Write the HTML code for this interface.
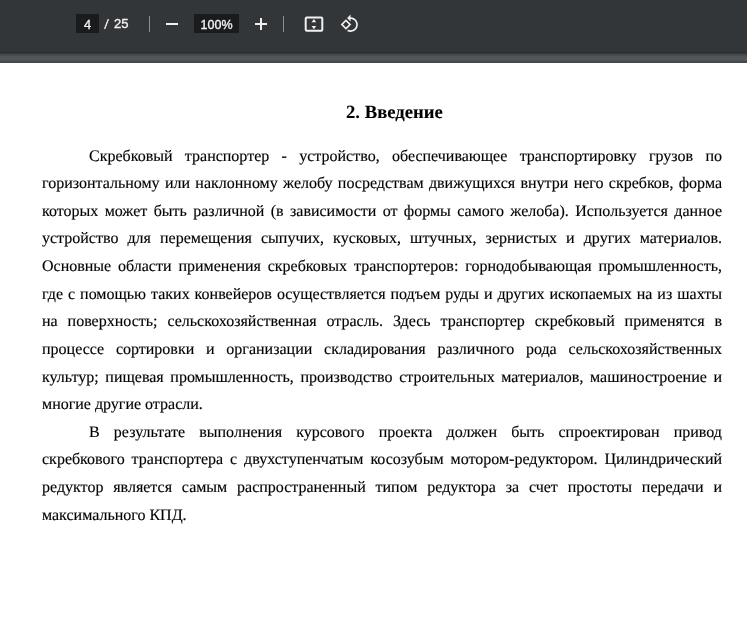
<!DOCTYPE html>
<html><head><meta charset="utf-8">
<style>
html,body{margin:0;padding:0;}
body{width:747px;height:631px;overflow:hidden;background:#525659;position:relative;}
#tb{position:absolute;left:0;top:0;width:747px;height:52px;background:#323639;will-change:transform;}
#sh{position:absolute;left:0;top:52px;width:747px;height:11px;background:linear-gradient(#2b2e30 0px,#2b2e30 1px,#383b3e 1px,#383b3e 2px,#424649 2px,#424649 3px,#4a4e51 3px,#4a4e51 4px,#505457 4px,#505457 5px,#525659 5px,#525659 6px,#525659 6px,#525659 7px,#54585b 7px,#54585b 8px,#4d5154 8px,#4d5154 9px,#474b4e 9px,#474b4e 10px,#424548 10px,#424548 11px);}
#page{position:absolute;left:0;top:63px;width:747px;height:568px;background:#fff;}
.ui{font-family:"Liberation Sans",sans-serif;color:#f1f1f1;position:absolute;-webkit-text-stroke:0.35px #f1f1f1;}
.box{background:#191b1c;position:absolute;}
.sep{position:absolute;width:1px;background:#8a8e91;}
.doc{font-family:"Liberation Serif",serif;color:#000;-webkit-text-stroke:0.15px #000;text-rendering:geometricPrecision;will-change:transform;}
.ln{position:absolute;left:42px;width:680px;font-size:16px;line-height:20px;white-space:nowrap;}
.j{text-align:justify;text-align-last:justify;white-space:normal;}
.h{position:absolute;left:346px;white-space:nowrap;font-weight:bold;font-size:18.7px;line-height:20px;-webkit-text-stroke:0.1px #000;}
</style></head><body>
<div id="tb">
  <div class="box" style="left:76px;top:14px;width:23px;height:19px;"></div>
  <div class="ui" style="left:84px;top:17px;font-size:13px;">4</div>
  <svg style="position:absolute;left:100px;top:14px;" width="12" height="20"><line x1="4.6" y1="14.9" x2="8.4" y2="5.1" stroke="#f1f1f1" stroke-width="1.35" stroke-linecap="butt"/></svg>
  <div class="ui" style="left:114px;top:16px;font-size:13px;">25</div>
  <div class="sep" style="left:149px;top:16px;height:16px;"></div>
  <div style="position:absolute;left:166px;top:23px;width:12px;height:2px;background:#f1f1f1;"></div>
  <div class="box" style="left:194px;top:14px;width:45px;height:19px;"></div>
  <div class="ui" style="left:200.6px;top:17.5px;font-size:12.5px;">100%</div>
  <div style="position:absolute;left:255px;top:23px;width:12px;height:2px;background:#f1f1f1;"></div>
  <div style="position:absolute;left:260px;top:18px;width:2px;height:12px;background:#f1f1f1;"></div>
  <div class="sep" style="left:283px;top:16px;height:16px;"></div>
  <svg style="position:absolute;left:303px;top:14px;" width="22" height="20" viewBox="0 0 22 20">
    <rect x="2.7" y="3.45" width="16.6" height="13.3" rx="1.2" fill="none" stroke="#f1f1f1" stroke-width="2"/>
    <path d="M10.9 5.0 L13.2 8.3 L8.6 8.3 Z M10.9 15.3 L13.2 12.1 L8.6 12.1 Z" fill="#f1f1f1"/>
  </svg>
  <svg style="position:absolute;left:340.2px;top:14.3px;" width="19.5" height="19.5" viewBox="0 0 24 24">
    <path fill="#f1f1f1" d="M7.34 6.41L.86 12.9l6.49 6.48 6.49-6.48-6.5-6.49zM3.69 12.9l3.66-3.66L11 12.9l-3.66 3.66-3.65-3.66zm15.67-6.26C17.61 4.88 15.3 4 13 4V.76L8.76 5 13 9.24V6c1.79 0 3.58.68 4.95 2.05 2.73 2.73 2.73 7.17 0 9.9C16.58 19.32 14.79 20 13 20c-.97 0-1.94-.21-2.84-.61l-1.49 1.49C10.02 21.62 11.51 22 13 22c2.3 0 4.61-.88 6.36-2.64 3.52-3.51 3.52-9.21 0-12.72z"/>
  </svg>
</div>
<div id="sh"></div>
<div id="page"></div>
<div class="doc">
  <div class="h" style="top:103px;">2. Введение</div>
  <div class="ln j" style="top:147px;padding-left:47px;width:633px;">Скребковый транспортер - устройство, обеспечивающее транспортировку грузов по</div>
  <div class="ln j" style="top:174px;">горизонтальному или наклонному желобу посредствам движущихся внутри него скребков, форма</div>
  <div class="ln j" style="top:202px;">которых может быть различной (в зависимости от формы самого желоба). Используется данное</div>
  <div class="ln j" style="top:229px;">устройство для перемещения сыпучих, кусковых, штучных, зернистых и других материалов.</div>
  <div class="ln j" style="top:257px;">Основные области применения скребковых транспортеров: горнодобывающая промышленность,</div>
  <div class="ln j" style="top:285px;">где с помощью таких конвейеров осуществляется подъем руды и других ископаемых на из шахты</div>
  <div class="ln j" style="top:312px;">на поверхность; сельскохозяйственная отрасль. Здесь транспортер скребковый применятся в</div>
  <div class="ln j" style="top:340px;">процессе сортировки и организации складирования различного рода сельскохозяйственных</div>
  <div class="ln j" style="top:368px;">культур; пищевая промышленность, производство строительных материалов, машиностроение и</div>
  <div class="ln" style="top:395px;">многие другие отрасли.</div>
  <div class="ln j" style="top:423px;padding-left:47px;width:633px;">В результате выполнения курсового проекта должен быть спроектирован привод</div>
  <div class="ln j" style="top:450px;">скребкового транспортера с двухступенчатым косозубым мотором-редуктором. Цилиндрический</div>
  <div class="ln j" style="top:478px;">редуктор является самым распространенный типом редуктора за счет простоты передачи и</div>
  <div class="ln" style="top:506px;">максимального КПД.</div>
</div>
</body></html>
